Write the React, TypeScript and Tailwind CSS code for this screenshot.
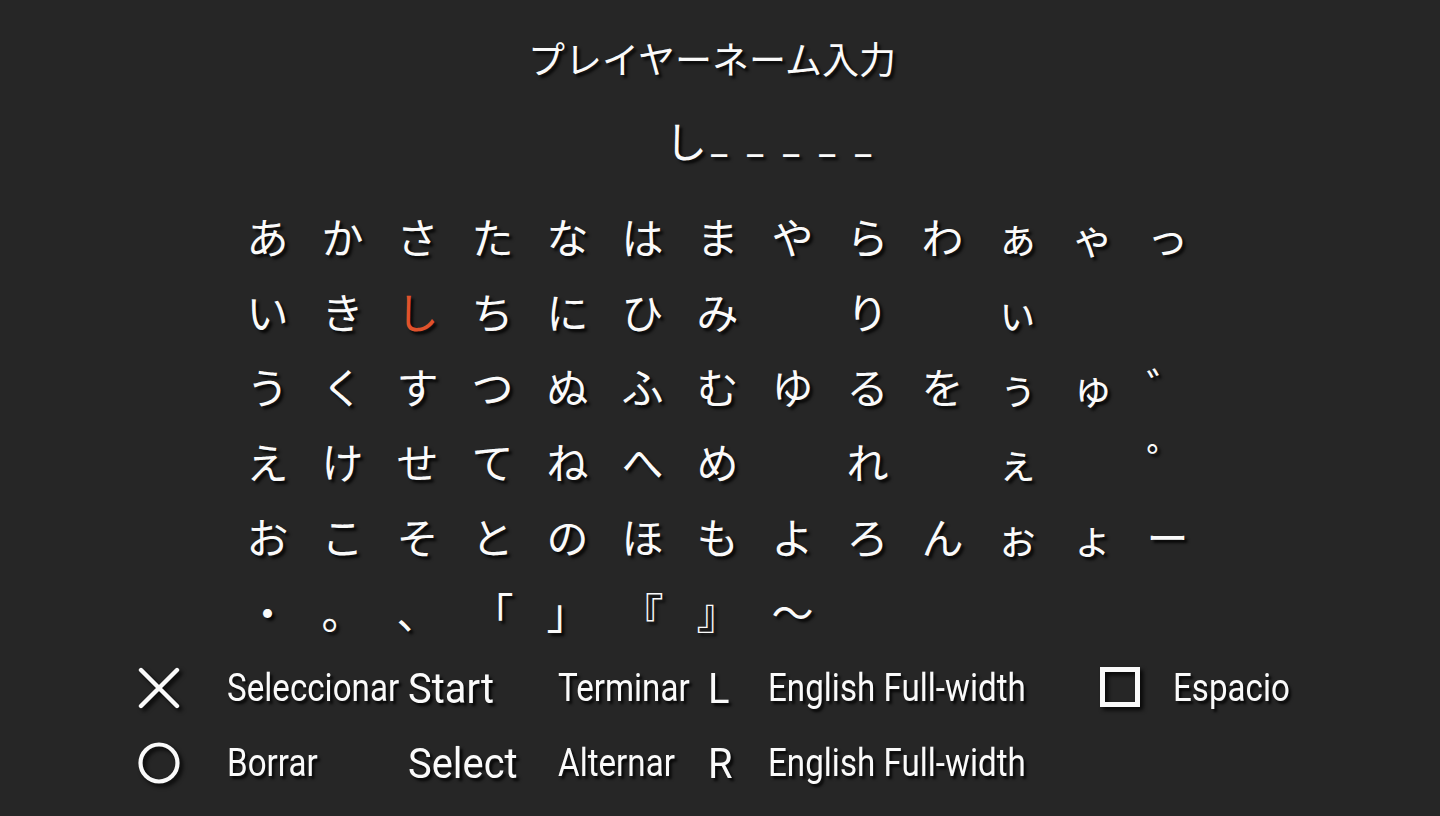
import React from 'react'

const rows: string[][] = [
  ['あ', 'か', 'さ', 'た', 'な', 'は', 'ま', 'や', 'ら', 'わ', 'ぁ', 'ゃ', 'っ'],
  ['い', 'き', 'し', 'ち', 'に', 'ひ', 'み', '', 'り', '', 'ぃ', '', ''],
  ['う', 'く', 'す', 'つ', 'ぬ', 'ふ', 'む', 'ゆ', 'る', 'を', 'ぅ', 'ゅ', '゛'],
  ['え', 'け', 'せ', 'て', 'ね', 'へ', 'め', '', 'れ', '', 'ぇ', '', '゜'],
  ['お', 'こ', 'そ', 'と', 'の', 'ほ', 'も', 'よ', 'ろ', 'ん', 'ぉ', 'ょ', 'ー'],
  ['・', '。', '、', '「', '」', '『', '』', '～', '', '', '', '', ''],
]

const shadow = '[text-shadow:3px_3px_3px_rgba(0,0,0,0.85)]'
const iconShadow = 'drop-shadow-[3px_3px_2px_rgba(0,0,0,0.85)]'

function Label({ text }: { text: string }) {
  return (
    <span className={`inline-block origin-left scale-x-[0.85] whitespace-nowrap text-[39px] leading-none ${shadow}`}>
      {text}
    </span>
  )
}

function Key({ text }: { text: string }) {
  return (
    <span className={`inline-block origin-left scale-x-[0.95] whitespace-nowrap text-[42px] leading-none ${shadow}`}>
      {text}
    </span>
  )
}

function CrossIcon() {
  return (
    <svg width="44" height="44" viewBox="0 0 44 44" className={iconShadow}>
      <path d="M3 3 L39 39 M39 3 L3 39" stroke="#fafafa" strokeWidth="4.4" strokeLinecap="round" fill="none" />
    </svg>
  )
}

function CircleIcon() {
  return (
    <svg width="44" height="44" viewBox="0 0 44 44" className={iconShadow}>
      <circle cx="21" cy="21" r="18.5" stroke="#fafafa" strokeWidth="4.2" fill="none" />
    </svg>
  )
}

function SquareIcon() {
  return (
    <svg width="44" height="44" viewBox="0 0 44 44" className={iconShadow}>
      <rect x="2.5" y="2.5" width="35" height="35" stroke="#fafafa" strokeWidth="5" fill="none" />
    </svg>
  )
}

export default function App() {
  const jp = "font-['Noto_Sans_CJK_JP',sans-serif]"
  return (
    <div className="w-full h-[816px] overflow-hidden bg-[#262626] text-[#fafafa] font-['Roboto','Noto_Sans_CJK_JP',sans-serif]">
      <div className={`pt-[36px] text-center text-[37px] leading-[44px] pr-[16px] ${jp} ${shadow}`}>
        プレイヤーネーム入力
      </div>

      <div className="mt-[38px] flex pl-[665px] h-[44px]">
        <div className={`w-[36px] text-center text-[42px] leading-[44px] ${jp} ${shadow}`}>し</div>
        {[0, 1, 2, 3, 4].map((i) => (
          <div key={i} className={`w-[36px] pt-[2px] text-center text-[36px] leading-[44px] font-['Roboto',sans-serif] ${shadow}`}>
            _
          </div>
        ))}
      </div>

      <div className={`mt-[36px] ml-[230px] grid grid-cols-[repeat(13,75px)] auto-rows-[75px] ${jp}`}>
        {rows.map((row, r) =>
          row.map((ch, c) => (
            <div
              key={`${r}-${c}`}
              className={`flex items-center justify-center text-[42px] leading-none ${shadow} ${
                r === 1 && c === 2 ? 'text-[#e0522c]' : ''
              }`}
            >
              {ch}
            </div>
          ))
        )}
      </div>

      <div className="mt-[3px] pl-[138px] grid grid-cols-[89px_181px_150px_150px_60px_332px_73px_auto] auto-rows-[75px] items-center">
        <div className="flex items-center"><CrossIcon /></div>
        <div><Label text="Seleccionar" /></div>
        <div><Key text="Start" /></div>
        <div><Label text="Terminar" /></div>
        <div><Key text="L" /></div>
        <div><Label text="English Full-width" /></div>
        <div className="flex items-center"><SquareIcon /></div>
        <div><Label text="Espacio" /></div>

        <div className="flex items-center"><CircleIcon /></div>
        <div><Label text="Borrar" /></div>
        <div><Key text="Select" /></div>
        <div><Label text="Alternar" /></div>
        <div><Key text="R" /></div>
        <div><Label text="English Full-width" /></div>
        <div />
        <div />
      </div>
    </div>
  )
}
